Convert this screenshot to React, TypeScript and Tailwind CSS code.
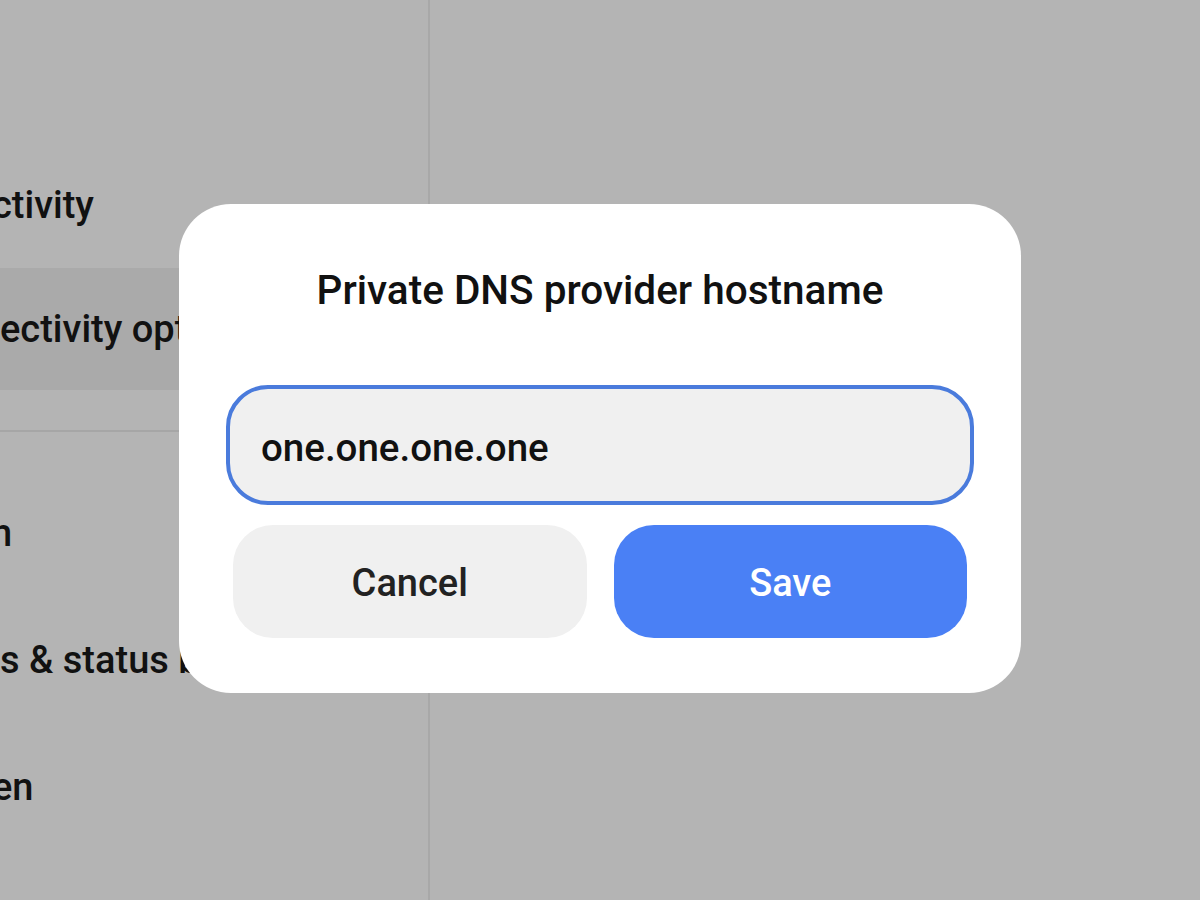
import { useState } from "react";

const font = { fontFamily: "Roboto, 'Noto Sans', sans-serif" };

const lowerRows = [
  { label: "n", shift: "-ml-[9px]" },
  { label: "s & status bar", shift: "ml-0" },
  { label: "en", shift: "-ml-[8px]" },
];

export default function App() {
  const [hostname, setHostname] = useState("one.one.one.one");

  return (
    <div className="relative h-[900px] w-[1200px] overflow-hidden bg-[#b4b4b4] text-[#111]" style={font}>
      <div className="flex h-full">
        <div className="flex w-[428px] flex-col overflow-hidden">
          <div className="h-[143px] shrink-0" />
          <div className="flex h-[125px] shrink-0 items-center text-[38px] font-medium">
            <span className="-ml-[8px]">ctivity</span>
          </div>
          <div className="flex h-[122px] shrink-0 items-center whitespace-nowrap bg-[#aaaaaa] text-[38px] font-medium">
            ectivity options
          </div>
          <div className="h-[40px] shrink-0" />
          <div className="h-[2px] shrink-0 bg-[#a6a6a6]" />
          <div className="h-[38px] shrink-0" />
          {lowerRows.map((row) => (
            <div key={row.label} className="flex h-[127px] shrink-0 items-center whitespace-nowrap text-[38px] font-medium">
              <span className={row.shift}>{row.label}</span>
            </div>
          ))}
        </div>
        <div className="w-[2px] bg-[#a8a8a8]" />
        <div className="flex-1" />
      </div>

      <div className="absolute left-[179px] top-[204px] flex h-[489px] w-[842px] flex-col rounded-[52px] bg-white px-[47px]">
        <h2 className="mt-[63px] text-center text-[40.5px] font-medium leading-[46px] text-[#111]">
          Private DNS provider hostname
        </h2>
        <input
          className="mt-[72px] h-[120px] w-full rounded-[42px] border-[4px] border-[#4a7bdc] bg-[#f0f0f0] px-[31px] pt-[4px] text-[38.5px] font-medium text-[#111] outline-none"
          value={hostname}
          onChange={(event) => setHostname(event.target.value)}
        />
        <div className="mt-[20px] flex gap-[27px] px-[7px]">
          <button className="h-[113px] flex-1 rounded-[40px] bg-[#f0f0f0] pt-[4px] text-[38px] font-medium text-[#222]">
            Cancel
          </button>
          <button className="h-[113px] flex-1 rounded-[40px] bg-[#4a80f5] pt-[4px] text-[38px] font-medium text-white">
            Save
          </button>
        </div>
      </div>
    </div>
  );
}
